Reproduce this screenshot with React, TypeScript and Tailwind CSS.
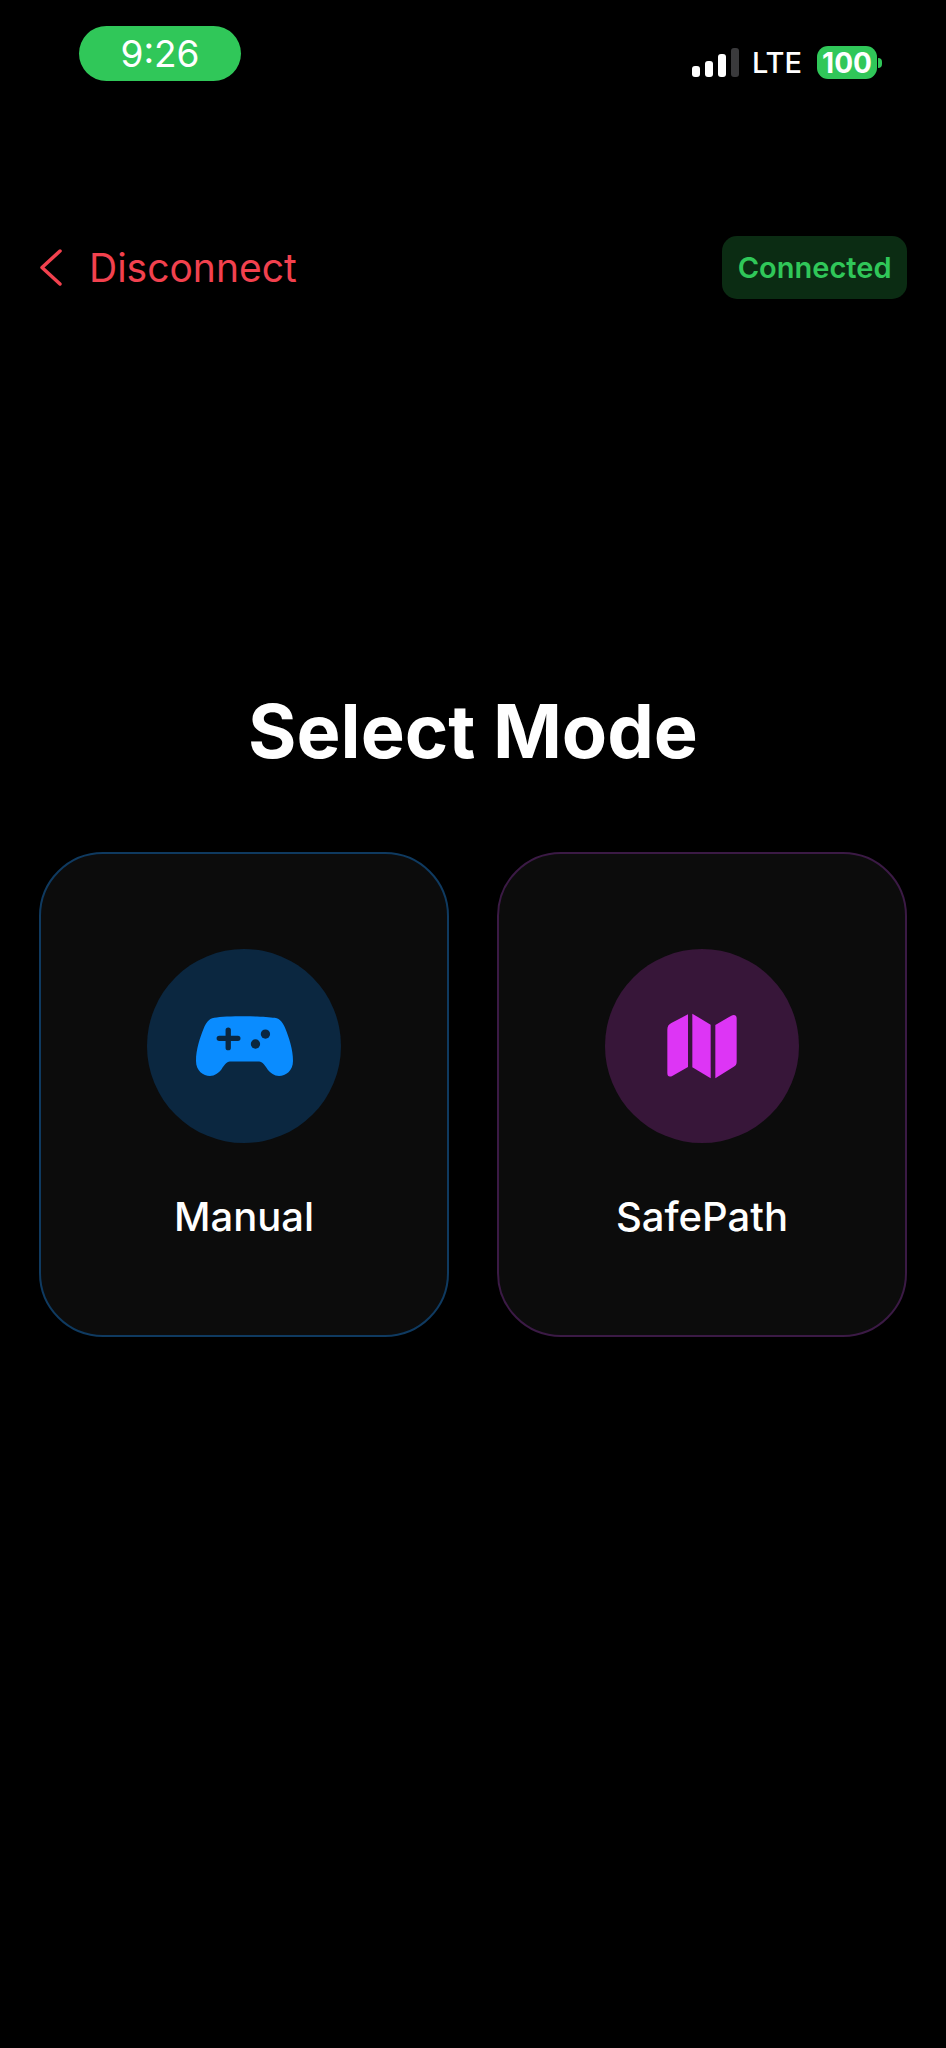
import React from 'react';

const GamepadIcon = () => (
  <svg width="97" height="60" viewBox="0 0 292 180" className="block">
    <path
      fill="#0a8cff"
      d="M55 5C90 -1 200 -1 237 5C255 8 262 22 268 35C280 65 292 100 292 135C292 165 270 180 250 180C235 180 225 172 215 160C208 150 200 137 190 137L102 137C92 137 84 150 77 160C67 172 57 180 42 180C22 180 0 165 0 135C0 100 12 65 24 35C30 22 37 8 55 5Z"
    />
    <path d="M70 67H126M97 42V95" stroke="#0b2740" strokeWidth="16" strokeLinecap="round" fill="none" />
    <circle cx="209" cy="54" r="14" fill="#0b2740" />
    <circle cx="179" cy="84" r="14" fill="#0b2740" />
  </svg>
);

const MapIcon = () => (
  <svg width="70" height="66" viewBox="0 0 208 198" className="block">
    <g fill="#dd35f5">
      <path d="M62 4V162L16 188C6 194 0 190 0 180V50C0 40 4 34 12 30Z" />
      <path d="M75 2L130 35V196L75 163Z" />
      <path d="M144 36L192 8C201 3 208 7 208 16V146C208 154 205 158 198 162L144 196Z" />
    </g>
  </svg>
);

const ModeCard = ({
  label,
  border,
  circle,
  icon,
}: {
  label: string;
  border: string;
  circle: string;
  icon: React.ReactNode;
}) => (
  <div className={`h-[485px] rounded-[64px] border-[2px] bg-[#0c0c0c] flex flex-col items-center pt-[95px] ${border}`}>
    <div className={`w-[194px] h-[194px] rounded-full flex items-center justify-center ${circle}`}>{icon}</div>
    <span className="mt-[50px] text-[40px] leading-[48px] font-medium text-white">{label}</span>
  </div>
);

export default function App() {
  return (
    <div className="min-h-[2048px] bg-black font-['Inter',sans-serif]">
      <div className="flex items-start justify-between pt-[26px] pl-[79px] pr-[64px] h-[236px]">
        <div className="w-[162px] h-[55px] rounded-full bg-[#30c759] flex items-center justify-center text-white text-[37px] leading-none">
          9:26
        </div>
        <div className="flex items-center mt-[20px]">
          <div className="flex items-end gap-[5px] h-[29px]">
            <div className="w-[8px] h-[11px] rounded-[3px] bg-white" />
            <div className="w-[8px] h-[16px] rounded-[3px] bg-white" />
            <div className="w-[8px] h-[23px] rounded-[3px] bg-white" />
            <div className="w-[8px] h-[29px] rounded-[3px] bg-[#3a3a3c]" />
          </div>
          <span className="ml-[13px] text-white text-[29px] leading-none font-medium">LTE</span>
          <div className="ml-[15px] w-[60px] h-[33px] rounded-[11px] bg-[#30c759] flex items-center justify-center text-white text-[28px] leading-none font-bold">
            100
          </div>
          <div className="ml-[1px] w-[4px] h-[10px] rounded-r-full bg-[#30c759]" />
        </div>
      </div>

      <div className="flex items-center justify-between px-[39px]">
        <div className="flex items-center">
          <svg width="24" height="38" viewBox="0 0 24 38" className="block">
            <path d="M21 2L3 18.500L21 35" stroke="#f2414e" strokeWidth="3.500" fill="none" strokeLinecap="round" strokeLinejoin="round" />
          </svg>
          <span className="ml-[26px] text-[#f2414e] text-[39px] leading-[48px]">Disconnect</span>
        </div>
        <div className="h-[63px] rounded-[15px] bg-[#0b2c13] px-[15.500px] flex items-center text-[#30c759] text-[29px] font-semibold">
          Connected
        </div>
      </div>

      <h1 className="mt-[385px] text-center text-white text-[74px] leading-[94px] font-bold">Select Mode</h1>

      <div className="mt-[74px] grid grid-cols-2 gap-[48px] px-[39px]">
        <ModeCard label="Manual" border="border-[#0f3a60]" circle="bg-[#0b2740]" icon={<GamepadIcon />} />
        <ModeCard label="SafePath" border="border-[#3b1a45]" circle="bg-[#371639]" icon={<MapIcon />} />
      </div>
    </div>
  );
}
